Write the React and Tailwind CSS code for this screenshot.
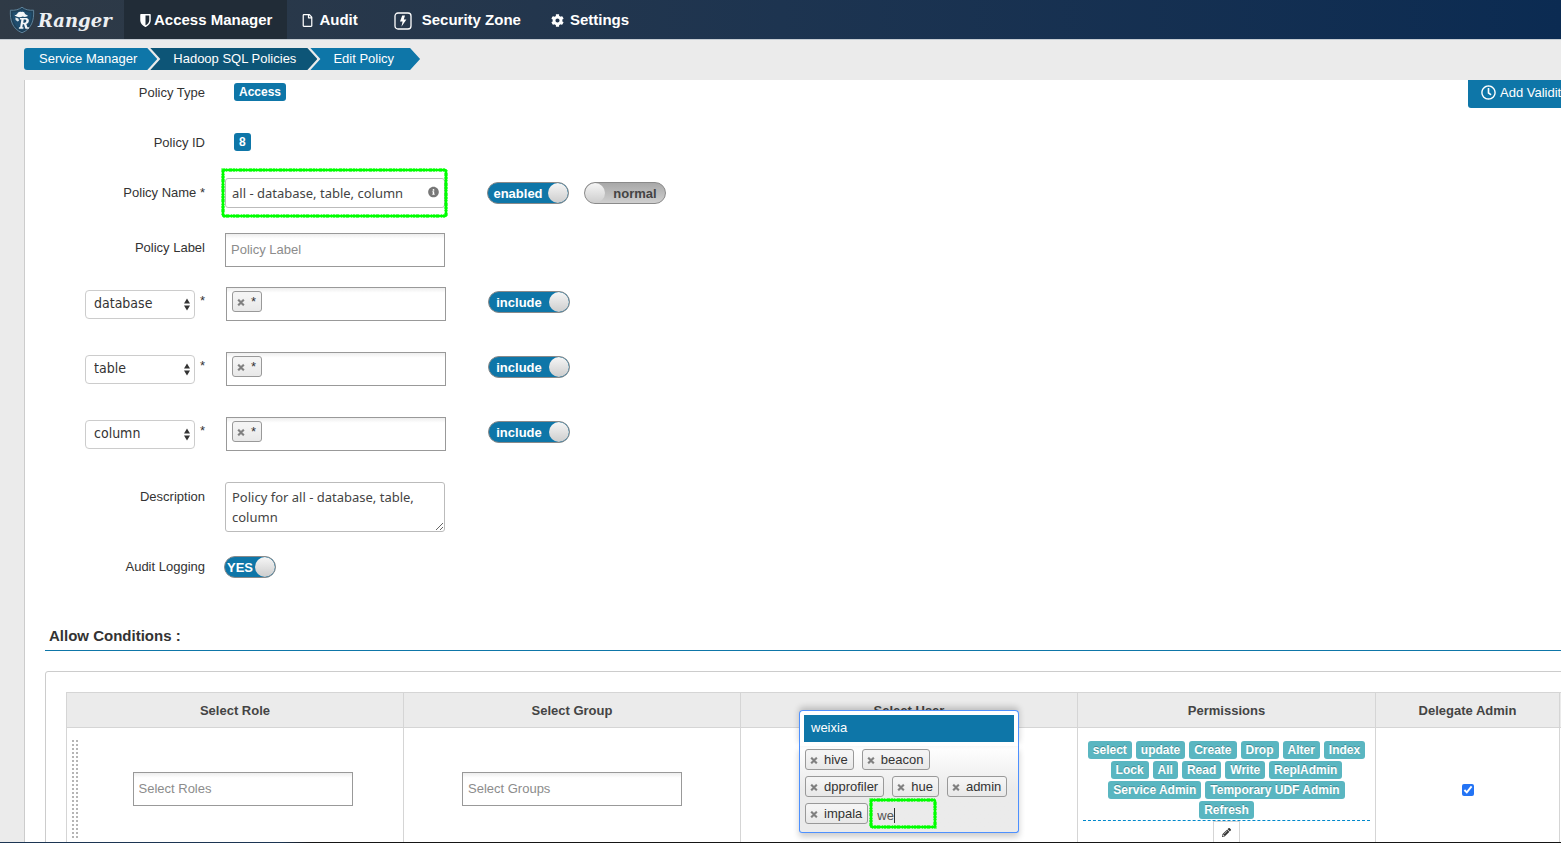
import { useState } from "react";
import {
  FaCog,
  FaInfoCircle,
  FaPencilAlt,
  FaRegClock,
  FaRegFile,
  FaTimes,
} from "react-icons/fa";

const resources = ["database", "table", "column"];

const users = ["hive", "beacon", "dpprofiler", "hue", "admin", "impala"];

const permissions = [
  "select",
  "update",
  "Create",
  "Drop",
  "Alter",
  "Index",
  "Lock",
  "All",
  "Read",
  "Write",
  "ReplAdmin",
  "Service Admin",
  "Temporary UDF Admin",
  "Refresh",
];

function RangerLogo() {
  return (
    <svg className="h-7 w-[26px]" viewBox="0 0 26 28" aria-hidden>
      <path d="M13 1.2C16 3.6 20 4.6 24.6 4.2c.6 10.6-2.2 18.6-11.6 22.6C3.6 22.8.8 14.8 1.4 4.2 6 4.6 10 3.6 13 1.2z" fill="#1f4058" stroke="#5d8199" strokeWidth="1" />
      <path d="M13 3.4c2.8 2 6 2.8 9.6 2.8.2 8.6-2.4 15-9.6 18.4C5.8 21.2 3.2 14.8 3.4 6.2 7 6.2 10.2 5.4 13 3.4z" fill="#1f4d6e" />
      <path d="M5.2 8.8c1.4.6 2.4.2 3.2-1.2.8-1.8 2.4-2.4 4-1.6 1.8-.6 3.2.2 3.600 2l3 1.800c-1 1.200-3.400 1.400-5.400.8-2.400 1.200-6.600.8-8.400-1.800z" fill="#f4f7f9" />
      <path d="M6.4 11.4l3 1 .6 2.4-1.4.8-2-1.6z" fill="#dfe7ec" />
      <path d="M11 12h5.4c3 0 4 2 3.2 3.9-.5 1.1-1.3 1.7-2.3 2l1.1 3.4H20l-.2 1.5h-3.4l-1.4-4.6h-1.2l-.5 3.1h1.2l-.2 1.5H9.8l.2-1.5h1.1l1.3-7.8H10.8zm3.7 1.5l-.5 3.2h1.5c1.700 0 2.500-3.200.5-3.200z" fill="#f4f7f9" />
    </svg>
  );
}

function ShieldIcon() {
  return (
    <svg className="h-[13px] w-[13px]" viewBox="0 0 13 13" aria-hidden>
      <path d="M2 .8h9V6.200c0 2.800-2 4.800-4.500 6C4 11 2 9 2 6.200z" fill="none" stroke="#fff" strokeWidth="1.500" strokeLinejoin="round" />
      <path d="M2 .8h4.500V12.200C4 11 2 9 2 6.200z" fill="#fff" />
    </svg>
  );
}

function ZoneIcon() {
  return (
    <svg className="mr-1 ml-1.5 h-[18px] w-[18px]" viewBox="0 0 18 18" aria-hidden>
      <rect x="1" y="1" width="16" height="16" rx="3" fill="none" stroke="#fff" strokeWidth="1.3" />
      <path d="M8.2 3.4h2.8L9.8 7.4h2.6L7.4 14.8l1.2-5.4H6z" fill="#fff" />
    </svg>
  );
}

// Hand-drawn highlighter frame around a field
function Marker({ className }) {
  return (
    <svg className={"pointer-events-none absolute overflow-visible " + className} aria-hidden>
      <rect width="100%" height="100%" rx="1" fill="none" stroke="#0f0" strokeWidth="2.6" />
      <rect width="100%" height="100%" fill="none" stroke="#0f0" strokeOpacity="0.7" strokeWidth="3.4" strokeDasharray="2 1 1 2 3 1" />
    </svg>
  );
}

function NavItem({ icon, label, active }) {
  return (
    <a
      href="#"
      className={
        "flex items-center px-[15px] pt-0.5 text-[15px] font-bold text-white " +
        (active ? "gap-0.5 bg-[#212c37]" : "gap-1.5")
      }
    >
      {icon}
      {label}
    </a>
  );
}

function Toggle({ label, on = true, className = "w-[82px]" }) {
  const [checked, setChecked] = useState(on);

  return (
    <button
      type="button"
      role="switch"
      aria-checked={checked}
      onClick={() => setChecked(!checked)}
      className={
        "flex h-[22px] shrink-0 items-center overflow-hidden rounded-full border border-[#8a8a8a] text-[13px] font-bold " +
        (checked
          ? "bg-[#0e76a8] text-white "
          : "flex-row-reverse bg-linear-to-b from-[#a8a8a8] to-[#cfcfcf] text-[#444] ") +
        className
      }
    >
      <span className="flex-1 pt-0.5 text-center">{label}</span>
      <span className="h-5 w-5 rounded-full bg-linear-to-b from-[#f6f6f6] to-[#cdcdcd]" />
    </button>
  );
}

function Badge({ children }) {
  return (
    <span className="inline-block h-[18px] rounded-[3px] bg-[#0e76a8] px-[5px] text-[12px] leading-[18px] font-bold text-white">
      {children}
    </span>
  );
}

function Tag({ label }) {
  return (
    <span className="flex h-[21px] items-center gap-1.5 rounded-[3px] border border-[#999] bg-linear-to-b from-[#f4f4f4] from-20% to-[#e8e8e8] pr-[5px] pl-1 text-[13px] leading-[19px] text-[#333]">
      <button type="button" aria-label={"Remove " + label} className="mt-0.5 text-[#7d7d7d]">
        <FaTimes className="h-[9px] w-2" stroke="currentColor" strokeWidth="30" />
      </button>
      {label}
    </span>
  );
}

function Row({ label, htmlFor, children, className = "" }) {
  return (
    <div className={"flex items-start gap-5 " + className}>
      <label htmlFor={htmlFor} className="w-[180px] shrink-0 pt-[5px] text-right leading-5">
        {label}
      </label>
      {children}
    </div>
  );
}

const boxClass =
  "h-[34px] w-[220px] border border-[#999] bg-white bg-linear-to-b from-[#eee] to-white to-15% px-[5px] text-[13px] placeholder:text-[#8c8c8c] outline-none";

function ResourceRow({ name }) {
  return (
    <div className="mb-[31px] flex items-start">
      <div className="ml-[60px] flex w-[120px] justify-between">
        <div className="relative mt-[3px]">
          <select
            aria-label="Resource"
            defaultValue={name}
            className="h-[29px] w-[110px] appearance-none rounded border border-[#ccc] bg-white px-2 pb-0.5 font-['DejaVu_Sans_Condensed','Noto_Sans',sans-serif] text-[14px] text-[#333]"
          >
            {resources.map((r) => (
              <option key={r}>{r}</option>
            ))}
          </select>
          <svg className="pointer-events-none absolute top-2 right-[5px] h-[13px] w-1.5" viewBox="0 0 6 13" fill="#333" aria-hidden>
            <path d="M3 0.5L6 5.5H0zM3 12.5L6 7.5H0z" />
          </svg>
        </div>
        <span className="pt-1 leading-5">*</span>
      </div>
      <div className={"ml-[21px] flex items-start pt-[3px] " + boxClass}>
        <Tag label="*" />
        <input aria-label={name + " values"} className="h-[21px] min-w-0 flex-1 pl-1 outline-none" />
      </div>
      <div className="mt-1 ml-[42px]">
        <Toggle label="include" />
      </div>
    </div>
  );
}

function UserPicker() {
  return (
    <div className="relative mx-auto w-[220px] rounded-b-[3px] border border-t-0 border-[#4d90fe] bg-linear-to-b from-white to-[#ebebeb] to-50% px-[5px] pt-[3px] pb-2 shadow-[0_4px_6px_rgba(0,0,0,0.2)]">
      {/* Suggestion list opens upwards, over the header row */}
      <div className="absolute -inset-x-px bottom-full rounded-t-[4px] border border-b-0 border-[#4d90fe] bg-white px-1 pt-1 pb-1 shadow-[0_-3px_6px_rgba(0,0,0,0.2)]">
        <ul role="listbox" aria-label="Users">
          <li role="option" aria-selected="true" className="bg-[#0e76a8] px-[7px] pb-0.5 text-[13px] leading-[25px] text-white">
            weixia
          </li>
        </ul>
      </div>
      <div className="flex flex-wrap gap-x-2 gap-y-1.5">
        {users.slice(0, -1).map((u) => (
          <Tag key={u} label={u} />
        ))}
        <div className="flex">
          <Tag label="impala" />
          <div className="relative ml-1 flex w-16 items-center pt-1 pl-[5px]">
            <input aria-label="Select User" defaultValue="we" className="w-[17px] text-[13px] leading-4 text-[#555] outline-none" />
            <span className="h-[15px] w-px bg-[#333]" />
            <Marker className="-top-[3px] -left-px h-[27px] w-16" />
          </div>
        </div>
      </div>
    </div>
  );
}

function ConditionsTable() {
  return (
    <table className="w-full table-fixed border-collapse text-[#444]">
      <colgroup>
        <col className="w-[337px]" />
        <col className="w-[337px]" />
        <col className="w-[337px]" />
        <col className="w-[298px]" />
        <col className="w-[184px]" />
        <col />
      </colgroup>
      <thead>
        <tr className="bg-[#ebebeb]">
          {["Select Role", "Select Group", "Select User", "Permissions", "Delegate Admin", ""].map((h) => (
            <th key={h} className="h-[35px] border border-[#d5d5d5] p-0 pt-0.5 text-[13px] font-bold">
              {h}
            </th>
          ))}
        </tr>
      </thead>
      <tbody>
        <tr>
          <td className="border border-[#d5d5d5] p-0 pl-[5px]">
            <div className="flex items-center pb-0.5">
              <span className="h-[98px] w-1.5 cursor-move border-x-2 border-dotted border-[#b5b5b5]" />
              <div className="flex-1 pl-1 text-center">
                <input aria-label="Select Roles" placeholder="Select Roles" className={"align-middle " + boxClass} />
              </div>
            </div>
          </td>
          <td className="border border-[#d5d5d5] p-0 pb-0.5 text-center">
            <input aria-label="Select Groups" placeholder="Select Groups" className={"align-middle " + boxClass} />
          </td>
          <td className="border border-[#d5d5d5] p-0">
            <UserPicker />
          </td>
          <td className="border border-[#d5d5d5] px-[5px] pt-[13px] pb-2">
            <div className="flex flex-wrap justify-center gap-x-1 gap-y-0.5 border-b border-dashed border-[#0088cc] pb-px">
              {permissions.map((p) => (
                <span key={p} className="h-[18px] rounded-[3px] bg-[#5ab6c1] px-[5px] text-[12px] leading-[18px] font-bold text-white [text-shadow:0_-1px_0_rgba(0,0,0,0.25)]">
                  {p}
                </span>
              ))}
            </div>
            <button type="button" aria-label="Edit permissions" className="mx-auto flex h-[22px] w-[27px] items-center justify-center border border-[#d5d5d5]">
              <FaPencilAlt className="h-[9px] w-[9px] text-[#333]" />
            </button>
          </td>
          <td className="border border-[#d5d5d5] p-0 text-center">
            <input type="checkbox" aria-label="Delegate Admin" defaultChecked className="h-3 w-3 align-middle accent-[#2474f5]" />
          </td>
          <td className="border border-[#d5d5d5] p-0" />
        </tr>
      </tbody>
    </table>
  );
}

export default function App() {
  return (
    <div className="flex h-screen flex-col overflow-hidden bg-[#ebebeb] font-['Liberation_Sans',Arial,sans-serif] text-[13px] text-[#333]">
      <header className="flex h-10 shrink-0 border-b border-[#c5ccd3] bg-linear-to-r from-[#2f3a46] via-[#1d3450] to-[#0b2b52]">
        <a href="#" className="flex w-[124px] items-center gap-[3px] pl-[9px]">
          <RangerLogo />
          <span className="pt-0.5 font-['DejaVu_Serif',serif] text-[18px] font-bold text-[#eceff2] italic">Ranger</span>
        </a>
        <nav className="flex">
          <NavItem active icon={<ShieldIcon />} label="Access Manager" />
          <NavItem icon={<FaRegFile className="h-[13px] w-[11px]" />} label="Audit" />
          <NavItem icon={<ZoneIcon />} label="Security Zone" />
          <NavItem icon={<FaCog className="h-[13px] w-[13px]" />} label="Settings" />
        </nav>
      </header>

      <nav aria-label="Breadcrumb" className="flex h-10 shrink-0 items-start pt-2 pl-6 leading-[22px] text-white">
        <a href="#" className="rounded-l-[3px] bg-[#0e76a8] pr-5 pl-[15px] [clip-path:polygon(0_0,calc(100%-10px)_0,100%_50%,calc(100%-10px)_100%,0_100%)]">
          Service Manager
        </a>
        <a href="#" className="-ml-[7px] bg-[#0d5577] pr-[21px] pl-[23px] [clip-path:polygon(0_0,calc(100%-10px)_0,100%_50%,calc(100%-10px)_100%,0_100%,10px_50%)]">
          Hadoop SQL Policies
        </a>
        <a href="#" className="-ml-[7px] bg-[#0e76a8] pr-[26px] pl-[23px] [clip-path:polygon(0_0,calc(100%-10px)_0,100%_50%,calc(100%-10px)_100%,0_100%,10px_50%)]">
          Edit Policy
        </a>
      </nav>

      <main className="min-h-0 flex-1 overflow-hidden pl-6">
        <div className="relative -mr-20 border-l border-[#ccc] bg-white">
          <button type="button" className="absolute top-0 right-0 flex h-7 w-[173px] items-center gap-1 rounded-bl-[3px] bg-[#0e76a8] pb-[3px] pl-[13px] text-[13px] text-white">
            <FaRegClock className="h-[15px] w-[15px]" />
            Add Validit
          </button>

          <form className="pt-[3px]">
            <div className="mb-[30px] flex items-start gap-[29px]">
              <span className="w-[180px] text-right leading-5">Policy Type</span>
              <Badge>Access</Badge>
            </div>
            <div className="mb-[25px] flex items-start gap-[29px]">
              <span className="w-[180px] text-right leading-5">Policy ID</span>
              <Badge>8</Badge>
            </div>

            <Row label="Policy Name *" htmlFor="policyName" className="mb-[25px]">
              <div className="relative">
                <input
                  id="policyName"
                  defaultValue="all - database, table, column"
                  className="h-[30px] w-[220px] rounded-[3px] border border-[#bbb] px-1.5 font-['Noto_Sans','Open_Sans',sans-serif] text-[13px] text-[#444] outline-none"
                />
                <FaInfoCircle className="absolute top-2 right-1.5 h-3 w-[11px] text-[#777]" />
                <Marker className="-top-2 -left-0.5 h-[46px] w-[223px]" />
              </div>
              <div className="mt-1 ml-[22px] flex gap-[15px]">
                <Toggle label="enabled" />
                <Toggle label="normal" on={false} />
              </div>
            </Row>

            <Row label="Policy Label" htmlFor="policyLabel" className="mb-5">
              <input id="policyLabel" placeholder="Policy Label" className={"pb-0.5 " + boxClass} />
            </Row>

            {resources.map((r) => (
              <ResourceRow key={r} name={r} />
            ))}

            <Row label="Description" htmlFor="description" className="mb-6">
              <textarea
                id="description"
                defaultValue="Policy for all - database, table, column"
                className="block h-[50px] w-[220px] resize overflow-hidden rounded-[3px] border border-[#bbb] px-1.5 py-1 font-['Noto_Sans','Open_Sans',sans-serif] text-[13px] leading-5 text-[#444] outline-none"
              />
            </Row>

            <div className="flex items-center gap-[19px]">
              <span className="w-[180px] text-right leading-5">Audit Logging</span>
              <Toggle label="YES" className="w-[52px]" />
            </div>

            <h2 className="mt-12 ml-5 border-b border-[#0e76a8] pb-1 pl-1 text-[15px] leading-5 font-bold">
              Allow Conditions :
            </h2>
            <div className="mt-5 ml-5 rounded-[3px] border border-[#ccc] p-5">
              <ConditionsTable />
            </div>
          </form>
        </div>
      </main>
      <div className="h-px shrink-0 bg-linear-to-r from-[#1c3553] from-18% to-[#151515] to-20%" />
    </div>
  );
}
